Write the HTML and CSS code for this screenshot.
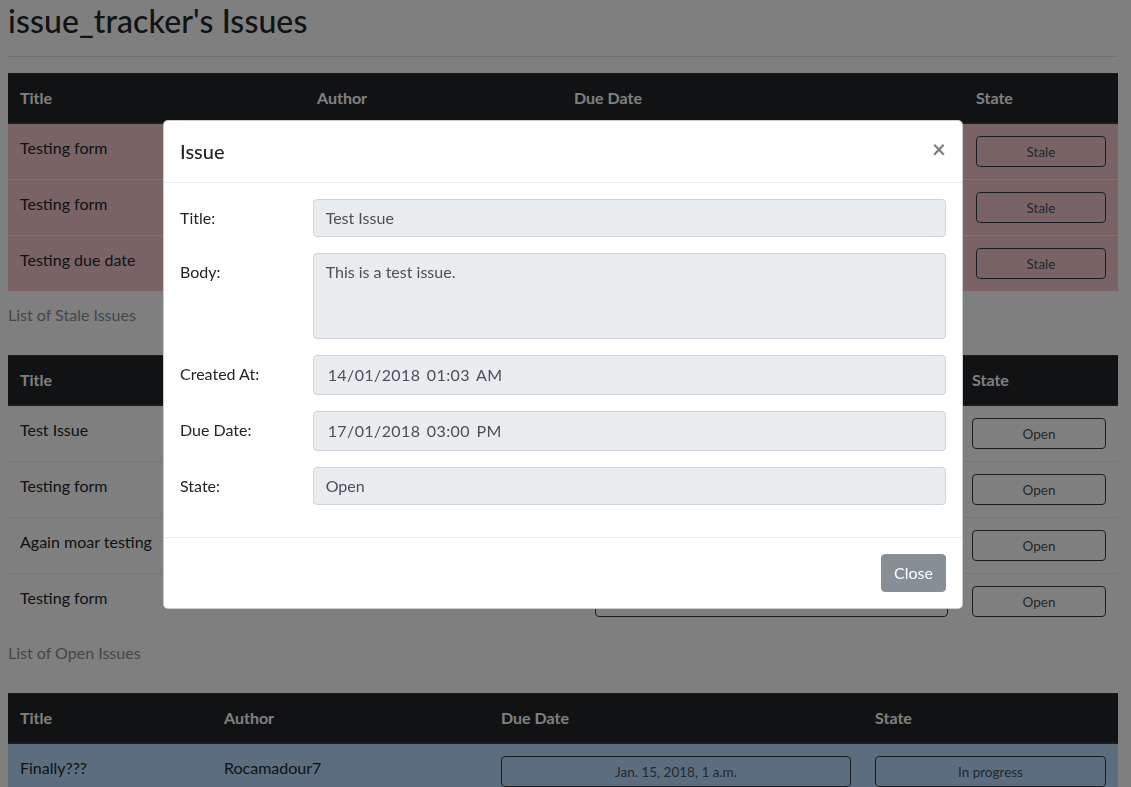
FILE: index.html
```html
<!DOCTYPE html>
<html lang="en">
<head>
<meta charset="utf-8">
<title>issue_tracker's Issues</title>
<link rel="stylesheet" href="styles.css">
</head>
<body>
<main class="page">
  <h2 class="page-title">issue_tracker's Issues</h2>
  <hr class="rule">

  <table class="issues">
    <caption>List of Stale Issues</caption>
    <colgroup><col class="c297"><col class="c257"><col class="c402"><col class="c154"></colgroup>
    <thead class="thead-dark"><tr><th>Title</th><th>Author</th><th>Due Date</th><th>State</th></tr></thead>
    <tbody>
      <tr class="row-danger"><td>Testing form</td><td>Rocamadour7</td><td><button class="pill">Jan. 12, 2018, 3 p.m.</button></td><td><button class="pill">Stale</button></td></tr>
      <tr class="row-danger"><td>Testing form</td><td>Rocamadour7</td><td><button class="pill">Jan. 12, 2018, 3 p.m.</button></td><td><button class="pill">Stale</button></td></tr>
      <tr class="row-danger"><td>Testing due date</td><td>Rocamadour7</td><td><button class="pill">Jan. 13, 2018, 3 p.m.</button></td><td><button class="pill">Stale</button></td></tr>
    </tbody>
  </table>

  <table class="issues">
    <caption>List of Open Issues</caption>
    <colgroup><col class="c300"><col class="c275"><col class="c377"><col class="c158"></colgroup>
    <thead class="thead-dark"><tr><th>Title</th><th>Author</th><th>Due Date</th><th>State</th></tr></thead>
    <tbody>
      <tr><td>Test Issue</td><td>Rocamadour7</td><td><button class="pill">Jan. 17, 2018, 3 p.m.</button></td><td><button class="pill">Open</button></td></tr>
      <tr><td>Testing form</td><td>Rocamadour7</td><td><button class="pill">Jan. 18, 2018, 3 p.m.</button></td><td><button class="pill">Open</button></td></tr>
      <tr><td>Again moar testing</td><td>Rocamadour7</td><td><button class="pill">Jan. 19, 2018, 3 p.m.</button></td><td><button class="pill">Open</button></td></tr>
      <tr><td>Testing form</td><td>Rocamadour7</td><td><button class="pill">Jan. 20, 2018, 3 p.m.</button></td><td><button class="pill">Open</button></td></tr>
    </tbody>
  </table>

  <table class="issues">
    <caption>List of In Progress Issues</caption>
    <colgroup><col class="c204"><col class="c277"><col class="c374"><col class="c255"></colgroup>
    <thead class="thead-dark"><tr><th>Title</th><th>Author</th><th>Due Date</th><th>State</th></tr></thead>
    <tbody>
      <tr class="row-primary"><td>Finally???</td><td>Rocamadour7</td><td><button class="pill">Jan. 15, 2018, 1 a.m.</button></td><td><button class="pill">In progress</button></td></tr>
    </tbody>
  </table>
</main>

<div class="backdrop"></div>

<div class="modal" role="dialog" aria-labelledby="modal-title">
  <div class="modal-header">
    <h5 class="modal-title" id="modal-title">Issue</h5>
    <button class="close" type="button" aria-label="Close">×</button>
  </div>
  <div class="modal-body">
    <div class="form-group">
      <label class="form-label">Title:</label>
      <div class="form-control">Test Issue</div>
    </div>
    <div class="form-group">
      <label class="form-label">Body:</label>
      <div class="form-control textarea">This is a test issue.</div>
    </div>
    <div class="form-group">
      <label class="form-label">Created At:</label>
      <div class="form-control date">14/01/2018 01:03 AM</div>
    </div>
    <div class="form-group">
      <label class="form-label">Due Date:</label>
      <div class="form-control date">17/01/2018 03:00 PM</div>
    </div>
    <div class="form-group">
      <label class="form-label">State:</label>
      <div class="form-control">Open</div>
    </div>
  </div>
  <div class="modal-footer">
    <button class="btn-secondary" type="button">Close</button>
  </div>
</div>
</body>
</html>
```
FILE: styles.css
```css
* { box-sizing: border-box; }

html, body {
  margin: 0;
  padding: 0;
}

body {
  font-family: "Lato", "Open Sans", sans-serif;
  font-size: 16px;
  line-height: 1.5;
  color: #212529;
  background: #fff;
  height: 787px;
  overflow: hidden;
}

.page {
  width: 1126px;
  padding: 2px 8px 0;
}

.page-title {
  margin: 0;
  font-size: 32px;
  font-weight: 500;
  line-height: 1.2;
  letter-spacing: 0.1px;
}

.rule {
  margin: 16px 0;
  border: 0;
  border-top: 1px solid rgba(0, 0, 0, 0.1);
}

.issues {
  width: 100%;
  border-collapse: collapse;
  table-layout: fixed;
  margin-bottom: 16px;
}

.issues caption {
  caption-side: bottom;
  text-align: left;
  padding: 12px 0;
  color: #868e96;
}

.c297 { width: 297px; }
.c257 { width: 257px; }
.c402 { width: 402px; }
.c154 { width: 154px; }
.c300 { width: 300px; }
.c275 { width: 275px; }
.c377 { width: 377px; }
.c158 { width: 158px; }
.c204 { width: 204px; }
.c277 { width: 277px; }
.c374 { width: 374px; }
.c255 { width: 255px; }

.issues th,
.issues td {
  padding: 12px;
  vertical-align: top;
  text-align: left;
  border-top: 1px solid #e9ecef;
  white-space: nowrap;
  overflow: hidden;
}

.thead-dark th {
  background: #212529;
  color: #fff;
  font-weight: 700;
  border-top: 1px solid #32383e;
  border-bottom: 2px solid #32383e;
}

.row-danger td { background: #f5c6cb; }
.row-primary td { background: #b8daff; }

.pill {
  display: block;
  width: 100%;
  height: 31px;
  margin: 0;
  padding: 4px 8px;
  font-family: inherit;
  font-size: 13.5px;
  line-height: 1.5;
  color: #495057;
  background: transparent;
  border: 1px solid #343a40;
  border-radius: 4px;
  text-align: center;
}

.backdrop {
  position: fixed;
  inset: 0;
  background: rgba(0, 0, 0, 0.5);
}

.modal {
  position: fixed;
  top: 120px;
  left: 163px;
  width: 800px;
  background: #fff;
  border: 1px solid rgba(0, 0, 0, 0.2);
  border-radius: 5px;
}

.modal-header {
  display: flex;
  align-items: flex-start;
  padding: 15px 16px 16px;
  border-bottom: 1px solid #e9ecef;
}

.modal-title {
  margin: 0;
  font-size: 20px;
  font-weight: 500;
  line-height: 30px;
}

.close {
  margin: -15px -16px -16px auto;
  padding: 16px;
  background: transparent;
  border: 0;
  font-family: inherit;
  font-size: 24px;
  font-weight: 700;
  line-height: 1;
  color: #000;
  opacity: 0.5;
}

.modal-body {
  padding: 16px;
}

.form-group {
  display: grid;
  grid-template-columns: 102.67px 1fr;
  column-gap: 30px;
  margin-bottom: 16px;
}

.form-label {
  padding: 7px 0;
  line-height: 1.5;
}

.form-control {
  display: block;
  width: 100%;
  height: 38px;
  padding: 6px 12px;
  font-size: 16px;
  line-height: 1.5;
  color: #495057;
  background: #e9ecef;
  border: 1px solid #ced4da;
  border-radius: 4px;
}

.form-control.textarea {
  height: 86px;
}

.form-control.date {
  height: 40px;
  padding: 7px 12px 7px 14px;
  letter-spacing: 0.4px;
  word-spacing: 2px;
}

.modal-footer {
  display: flex;
  justify-content: flex-end;
  padding: 16px;
  border-top: 1px solid #e9ecef;
}

.btn-secondary {
  padding: 6px 12px;
  font-family: inherit;
  font-size: 16px;
  line-height: 1.5;
  color: #fff;
  background: #868e96;
  border: 1px solid #868e96;
  border-radius: 4px;
}
```
